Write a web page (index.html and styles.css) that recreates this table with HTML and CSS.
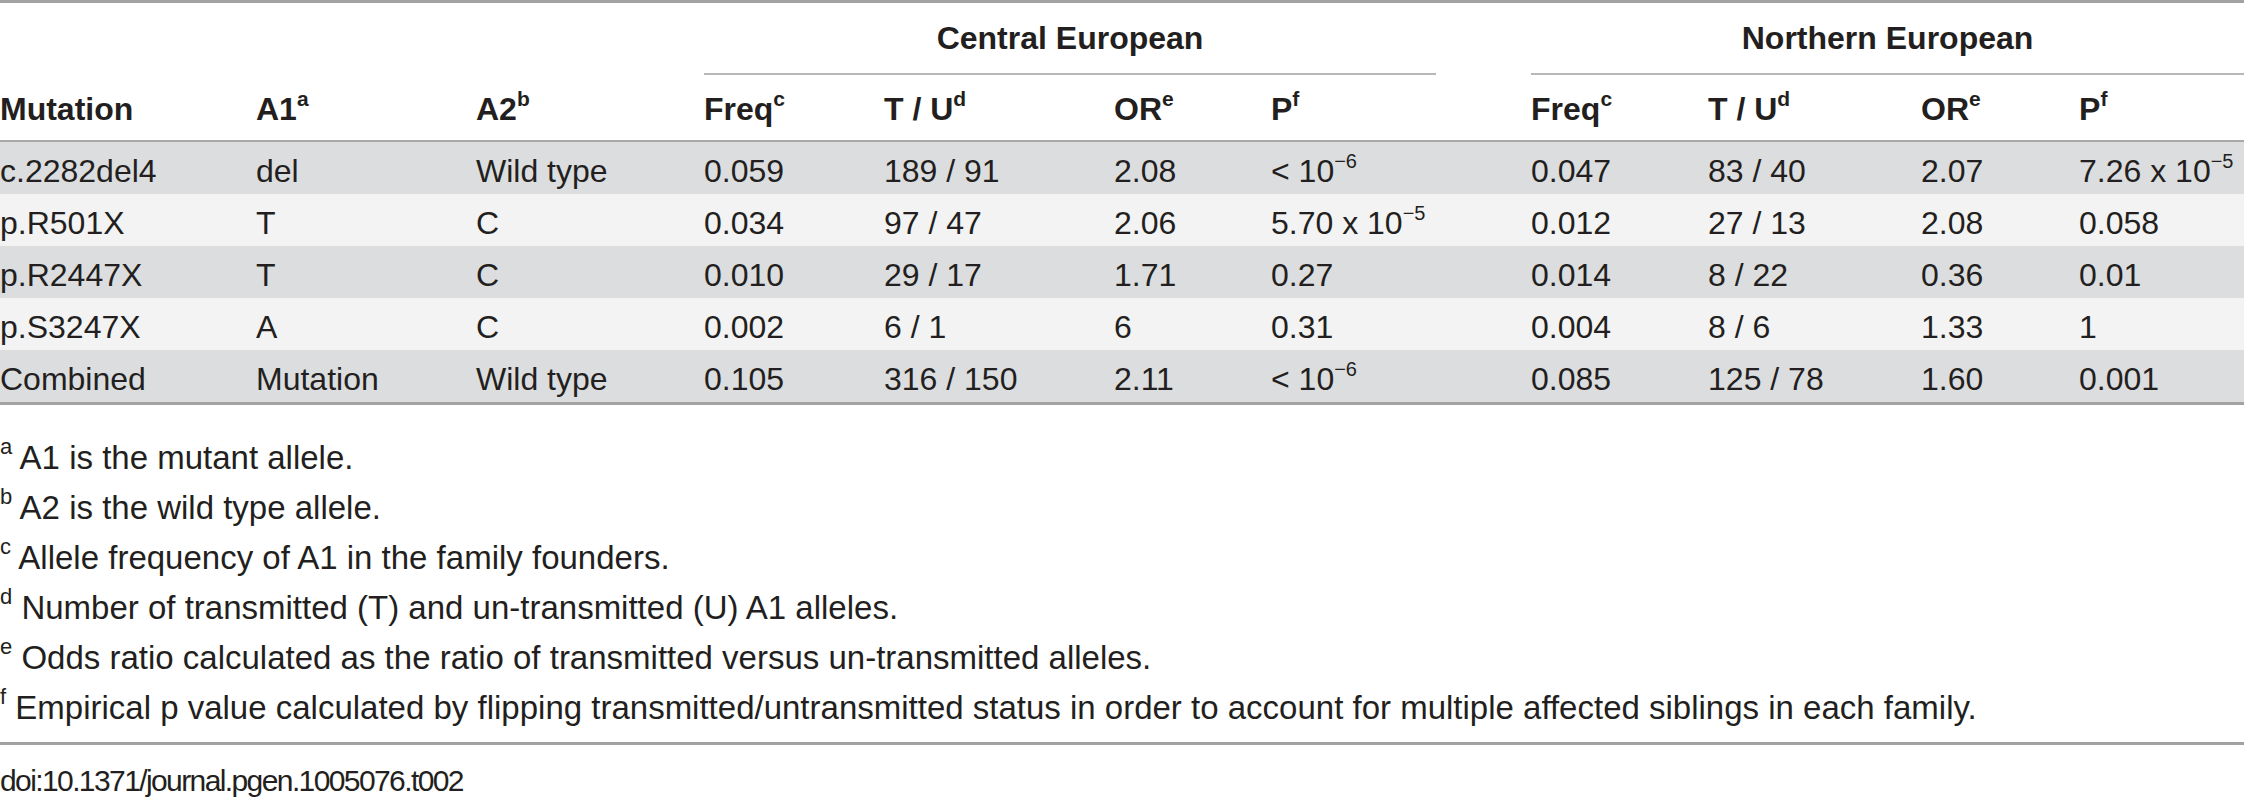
FILE: index.html
```html
<!DOCTYPE html>
<html>
<head>
<meta charset="utf-8">
<link rel="stylesheet" href="styles.css">
</head>
<body>
<table class="tbl">
  <colgroup>
    <col style="width:256px"><col style="width:220px"><col style="width:228px">
    <col style="width:180px"><col style="width:230px"><col style="width:157px"><col style="width:165px">
    <col style="width:95px">
    <col style="width:177px"><col style="width:213px"><col style="width:158px"><col style="width:165px">
  </colgroup>
  <thead>
    <tr class="grp-row">
      <th></th><th></th><th></th>
      <th class="grp" colspan="4">Central European</th>
      <th></th>
      <th class="grp" colspan="4">Northern European</th>
    </tr>
    <tr class="head-row">
      <th>Mutation</th>
      <th>A1<span class="sup">a</span></th>
      <th>A2<span class="sup">b</span></th>
      <th>Freq<span class="sup">c</span></th>
      <th>T / U<span class="sup">d</span></th>
      <th>OR<span class="sup">e</span></th>
      <th>P<span class="sup">f</span></th>
      <th></th>
      <th>Freq<span class="sup">c</span></th>
      <th>T / U<span class="sup">d</span></th>
      <th>OR<span class="sup">e</span></th>
      <th>P<span class="sup">f</span></th>
    </tr>
  </thead>
  <tbody>
    <tr class="dark">
      <td>c.2282del4</td><td>del</td><td>Wild type</td>
      <td>0.059</td><td>189 / 91</td><td>2.08</td><td><span class="lt">&lt;</span> 10<span class="exp">−6</span></td>
      <td></td>
      <td>0.047</td><td>83 / 40</td><td>2.07</td><td>7.26 x 10<span class="exp">−5</span></td>
    </tr>
    <tr class="light">
      <td>p.R501X</td><td>T</td><td>C</td>
      <td>0.034</td><td>97 / 47</td><td>2.06</td><td>5.70 x 10<span class="exp">−5</span></td>
      <td></td>
      <td>0.012</td><td>27 / 13</td><td>2.08</td><td>0.058</td>
    </tr>
    <tr class="dark">
      <td>p.R2447X</td><td>T</td><td>C</td>
      <td>0.010</td><td>29 / 17</td><td>1.71</td><td>0.27</td>
      <td></td>
      <td>0.014</td><td>8 / 22</td><td>0.36</td><td>0.01</td>
    </tr>
    <tr class="light">
      <td>p.S3247X</td><td>A</td><td>C</td>
      <td>0.002</td><td>6 / 1</td><td>6</td><td>0.31</td>
      <td></td>
      <td>0.004</td><td>8 / 6</td><td>1.33</td><td>1</td>
    </tr>
    <tr class="dark">
      <td>Combined</td><td>Mutation</td><td>Wild type</td>
      <td>0.105</td><td>316 / 150</td><td>2.11</td><td><span class="lt">&lt;</span> 10<span class="exp">−6</span></td>
      <td></td>
      <td>0.085</td><td>125 / 78</td><td>1.60</td><td>0.001</td>
    </tr>
  </tbody>
</table>
<div class="notes">
  <p class="note"><span class="fsup">a</span> A1 is the mutant allele.</p>
  <p class="note"><span class="fsup">b</span> A2 is the wild type allele.</p>
  <p class="note"><span class="fsup">c</span> Allele frequency of A1 in the family founders.</p>
  <p class="note"><span class="fsup">d</span> Number of transmitted (T) and un-transmitted (U) A1 alleles.</p>
  <p class="note"><span class="fsup">e</span> Odds ratio calculated as the ratio of transmitted versus un-transmitted alleles.</p>
  <p class="note"><span class="fsup">f</span> Empirical p value calculated by flipping transmitted/untransmitted status in order to account for multiple affected siblings in each family.</p>
</div>
<div class="rule"></div>
<p class="doi">doi:10.1371/journal.pgen.1005076.t002</p>
</body>
</html>
```
FILE: styles.css
```css
html, body {
  margin: 0;
  padding: 0;
  background: #ffffff;
}
body {
  width: 2244px;
  font-family: "Liberation Sans", Arial, Helvetica, sans-serif;
  color: #231f20;
  overflow: hidden;
}
.tbl {
  border-collapse: separate;
  border-spacing: 0;
  table-layout: fixed;
  width: 2244px;
  border-top: 3px solid #a2a2a2;
  border-bottom: 3px solid #a2a2a2;
}
.tbl th, .tbl td {
  padding: 0;
  text-align: left;
  font-size: 32px;
  line-height: 36px;
  vertical-align: top;
  white-space: nowrap;
  overflow: visible;
}
.tbl th {
  font-weight: bold;
}
.grp-row th {
  padding: 17px 0 17px;
}
.grp-row th.grp {
  text-align: center;
  border-bottom: 2px solid #b8b8b8;
}
.head-row th {
  padding: 16px 0 13px;
  border-bottom: 2px solid #a8a8a8;
}
.tbl td {
  padding: 11px 0 5px;
}
.dark td {
  background: #dcdddf;
}
.light td {
  background: #f3f3f3;
}
.sup {
  font-size: 21px;
  line-height: 0;
  vertical-align: 14px;
}
.exp {
  font-size: 20px;
  line-height: 0;
  vertical-align: 14px;
}
.lt {
  font-weight: normal;
}
.notes {
  padding-top: 28px;
}
.note {
  margin: 0;
  font-size: 33px;
  line-height: 50px;
  white-space: nowrap;
}
.fsup {
  font-size: 22px;
  line-height: 0;
  vertical-align: 15px;
}
.rule {
  margin-top: 9px;
  border-top: 3px solid #a2a2a2;
}
.doi {
  margin: 16px 0 0;
  font-size: 30px;
  line-height: 40px;
  letter-spacing: -1.6px;
  white-space: nowrap;
}
```
